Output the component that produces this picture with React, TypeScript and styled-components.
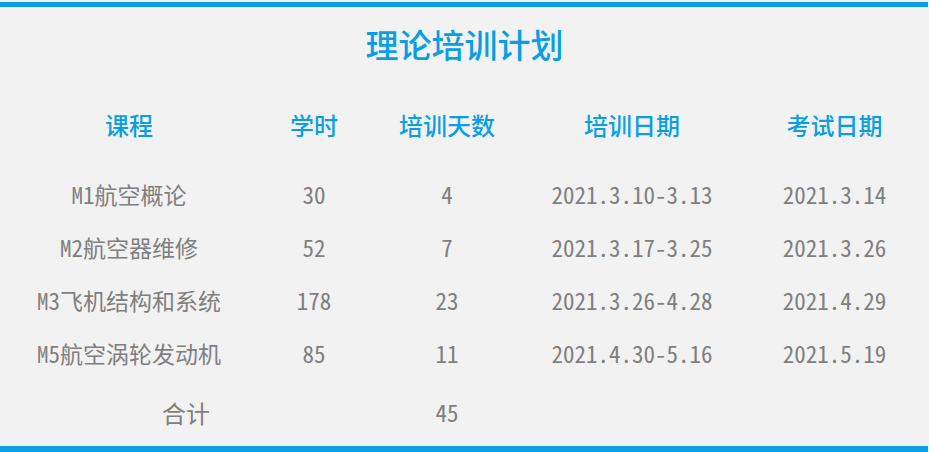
import { createGlobalStyle, styled } from 'styled-components';

const BLUE = '#0a9fe3';
const GRAY = '#7f7f7f';

const courses = [
  { name: 'M1航空概论', hours: 30, days: 4, training: '2021.3.10-3.13', exam: '2021.3.14' },
  { name: 'M2航空器维修', hours: 52, days: 7, training: '2021.3.17-3.25', exam: '2021.3.26' },
  { name: 'M3飞机结构和系统', hours: 178, days: 23, training: '2021.3.26-4.28', exam: '2021.4.29' },
  { name: 'M5航空涡轮发动机', hours: 85, days: 11, training: '2021.4.30-5.16', exam: '2021.5.19' },
];

const headers = ['课程', '学时', '培训天数', '培训日期', '考试日期'];

const GlobalStyle = createGlobalStyle`
  html, body {
    margin: 0;
    padding: 0;
    background: #f2f2f2;
  }
`;

const Page = styled.div`
  display: flex;
  flex-direction: column;
  height: 452px;
  width: 929px;
  padding-top: 2px;
  box-sizing: border-box;
  background: #f2f2f2;
  font-family: 'Noto Sans CJK SC', sans-serif;
`;

const Bar = styled.div<{ $bottom?: boolean }>`
  height: ${p => (p.$bottom ? '6px' : '5px')};
  width: 928px;
  background: ${BLUE};
  margin-top: ${p => (p.$bottom ? 'auto' : '0')};
  flex-shrink: 0;
`;

const Title = styled.h1`
  margin: 17px 0 0;
  height: 40px;
  line-height: 40px;
  text-align: center;
  font-size: 33px;
  font-weight: 500;
  color: ${BLUE};
`;

const Row = styled.div<{ $height: number; $gap: number }>`
  display: grid;
  grid-template-columns: 258px 112px 154px 216px 189px;
  height: ${p => p.$height}px;
  margin-top: ${p => p.$gap}px;
  align-items: center;
  text-align: center;
`;

const HeadCell = styled.div`
  font-size: 24px;
  font-weight: 500;
  color: ${BLUE};
  line-height: 1;
`;

const Cell = styled.div`
  font-family: 'Noto Sans Mono CJK SC', 'Noto Sans CJK SC', monospace;
  font-size: 23px;
  color: ${GRAY};
  line-height: 1;
  white-space: nowrap;
`;

const TotalLabel = styled.div`
  padding-left: 114px;
  font-size: 24px;
  color: ${GRAY};
  line-height: 1;
`;

export default function App() {
  const totalDays = courses.reduce((sum, c) => sum + c.days, 0);

  return (
    <>
      <GlobalStyle />
      <Page>
        <Bar />
        <Title>理论培训计划</Title>
        <Row $height={40} $gap={41}>
          {headers.map(h => (
            <HeadCell key={h}>{h}</HeadCell>
          ))}
        </Row>
        {courses.map((c, i) => (
          <Row key={c.name} $height={53} $gap={i === 0 ? 23 : 0}>
            <Cell>{c.name}</Cell>
            <Cell>{c.hours}</Cell>
            <Cell>{c.days}</Cell>
            <Cell>{c.training}</Cell>
            <Cell>{c.exam}</Cell>
          </Row>
        ))}
        <Row $height={53} $gap={6}>
          <TotalLabel>合计</TotalLabel>
          <span />
          <Cell>{totalDays}</Cell>
        </Row>
        <Bar $bottom />
      </Page>
    </>
  );
}
